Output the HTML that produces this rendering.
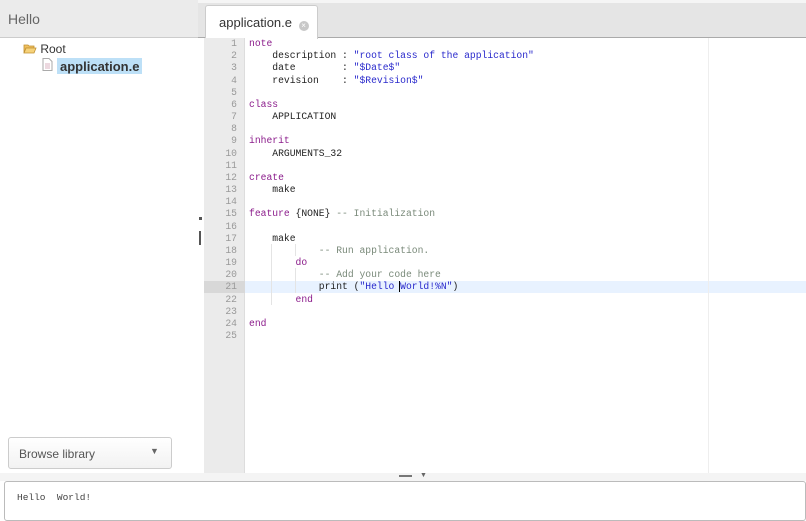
<!DOCTYPE html>
<html><head><style>
*{margin:0;padding:0;box-sizing:border-box}
body{width:806px;height:519px;overflow:hidden;background:#fff;font-family:"Liberation Sans",sans-serif;position:relative}
.a{position:absolute}
.code{font-family:"Liberation Mono",monospace;font-size:9.7px;line-height:12.17px;white-space:pre}
.k{color:#8b1c8b}.s{color:#2a2acc}.c{color:#7a8a7a}.t{color:#222}
</style></head><body>
<div class="a" style="left:0;top:0;width:198px;height:38px;background:#ebebeb;border-bottom:1px solid #ccc;font-size:14px;color:#666;padding:11px 0 0 8px">Hello</div>
<div class="a" style="left:198px;top:0;width:608px;height:3px;background:#f5f5f5"></div>
<div class="a" style="left:198px;top:3px;width:608px;height:35px;background:#e5e5e5;border-bottom:1px solid #aaa"></div>
<div class="a" style="left:205px;top:5px;width:113px;height:34px;background:#fff;border:1px solid #ccc;border-bottom:none;border-radius:3px 3px 0 0;font-size:13px;color:#333;padding:9px 0 0 13px">application.e <span style="display:inline-block;width:10px;height:10px;border-radius:50%;background:#c8c8c8;color:#fff;font-size:8px;line-height:10px;text-align:center;vertical-align:-1px;margin-left:3px">×</span></div>
<!-- tree -->
<div class="a" style="left:23px;top:42px;font-size:12px;color:#333"><svg width="14" height="11" style="vertical-align:-1px"><path d="M1 2h4l1 1h5v2H3L1 10z" fill="#f0c060" stroke="#c09030" stroke-width=".8"/><path d="M3 5h10l-2 5H1z" fill="#f6d27a" stroke="#c09030" stroke-width=".8"/></svg> Root</div>
<div class="a" style="left:42px;top:58px"><svg width="11" height="13"><path d="M1 .5h6l3 3v9H1z" fill="#fff" stroke="#aaa"/><path d="M3 6h5M3 8h5M3 10h5" stroke="#c9a" stroke-width=".8"/></svg></div>
<div class="a" style="left:57px;top:58px;height:16px;padding:1px 3px;background:#bde0f7;font-size:13px;font-weight:bold;color:#333">application.e</div>
<div class="a" style="left:8px;top:437px;width:164px;height:32px;border:1px solid #ccc;border-radius:3px;background:linear-gradient(#fff,#f2f2f2);font-size:12px;color:#555;padding:9px 0 0 10px">Browse library<span style="position:absolute;left:141px;top:8px;font-size:9px;color:#666">▼</span></div>
<div class="a" style="left:199px;top:217px;width:3px;height:3px;background:#555"></div>
<div class="a" style="left:199px;top:231px;width:2px;height:14px;background:#555"></div>
<!-- editor -->
<div class="a" style="left:204px;top:38px;width:41px;height:435px;background:#ebebeb;border-right:1px solid #ddd"></div>
<div class="a" style="left:204px;top:281px;width:41px;height:12px;background:#d8d8d8"></div>
<div class="a" style="left:245px;top:281px;width:561px;height:12px;background:#e8f2ff"></div>
<div class="a" style="left:708px;top:38px;width:1px;height:435px;background:#eee"></div>
<div class="a" style="left:271px;top:244px;width:1px;height:61px;background:#e4e4e4"></div>
<div class="a" style="left:295px;top:244px;width:1px;height:12px;background:#e4e4e4"></div>
<div class="a" style="left:295px;top:268px;width:1px;height:25px;background:#e4e4e4"></div>
<div class="a code" style="left:204px;top:38px;width:33px;text-align:right;color:#999">1
2
3
4
5
6
7
8
9
10
11
12
13
14
15
16
17
18
19
20
21
22
23
24
25</div>
<div class="a code t" style="left:249px;top:38px"><span class="k">note</span>
    description : <span class="s">"root class of the application"</span>
    date        : <span class="s">"$Date$"</span>
    revision    : <span class="s">"$Revision$"</span>

<span class="k">class</span>
    APPLICATION

<span class="k">inherit</span>
    ARGUMENTS_32

<span class="k">create</span>
    make

<span class="k">feature</span> {NONE} <span class="c">-- Initialization</span>

    make
            <span class="c">-- Run application.</span>
        <span class="k">do</span>
            <span class="c">-- Add your code here</span>
            print (<span class="s">"Hello <span style="border-left:1.5px solid #000;margin-left:-1px"></span>World!%N"</span>)
        <span class="k">end</span>

<span class="k">end</span></div>
<!-- splitter -->
<div class="a" style="left:0;top:473px;width:806px;height:8px;background:#f4f4f4"></div>
<div class="a" style="left:399px;top:475px;width:13px;height:1.5px;background:#777"></div>
<div class="a" style="left:420px;top:472px;font-size:7px;color:#666">▼</div>
<div class="a" style="left:4px;top:481px;width:802px;height:40px;border:1px solid #bbb;border-radius:3px;background:#fff"></div>
<div class="a code" style="left:17px;top:492px;font-size:9.5px;color:#444">Hello  World!</div>
</body></html>
